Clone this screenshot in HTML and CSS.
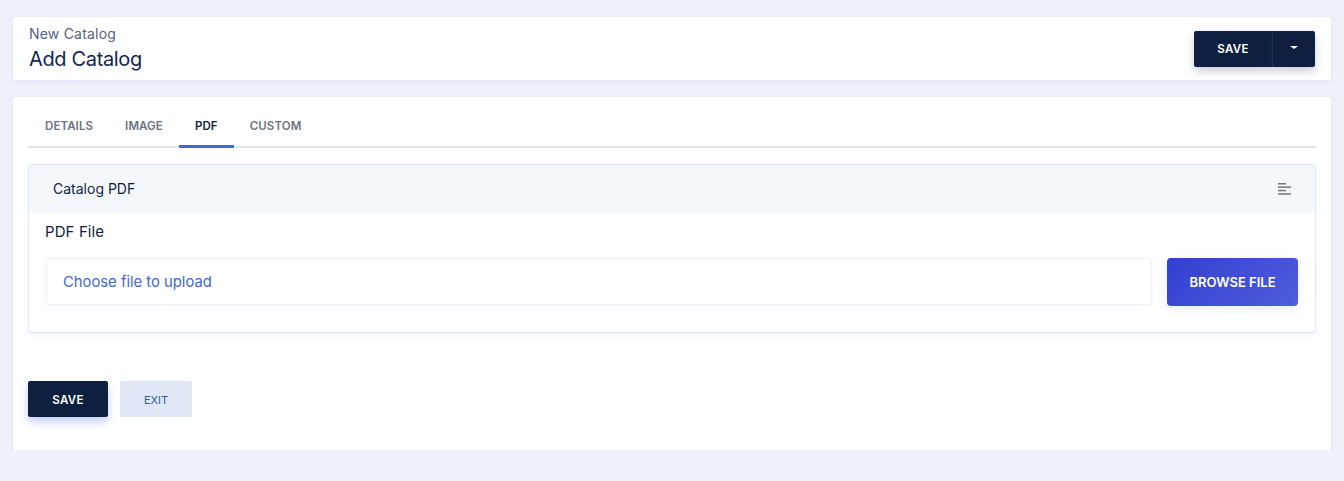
FILE: index.html
```html
<!DOCTYPE html>
<html lang="en">
<head>
    <meta charset="UTF-8">
    <title>Add Catalog</title>
    <link rel="stylesheet" href="styles.css">
</head>
<body>
    <header class="page-head">
        <div>
            <p class="crumb">New Catalog</p>
            <h1>Add Catalog</h1>
        </div>
        <div class="btn-split">
            <button class="btn btn-dark split-main">SAVE</button>
            <button class="btn btn-dark split-caret" aria-label="More"><span class="caret"></span></button>
        </div>
    </header>

    <main class="card">
        <nav class="tabs">
            <a class="tab">DETAILS</a>
            <a class="tab">IMAGE</a>
            <a class="tab active">PDF</a>
            <a class="tab">CUSTOM</a>
        </nav>

        <section class="panel">
            <div class="panel-head">
                <h2>Catalog PDF</h2>
                <svg class="panel-icon" width="14" height="14" viewBox="0 0 14 14" fill="#777">
                    <rect x="0" y="1" width="8" height="1.5"/>
                    <rect x="0" y="4.4" width="13" height="1.5"/>
                    <rect x="0" y="7.8" width="8" height="1.5"/>
                    <rect x="0" y="11.2" width="13" height="1.5"/>
                </svg>
            </div>
            <div class="panel-body">
                <label class="field-label">PDF File</label>
                <div class="upload">
                    <div class="upload-input">Choose file to upload</div>
                    <button class="browse-btn">BROWSE FILE</button>
                </div>
            </div>
        </section>

        <div class="actions">
            <button class="btn btn-dark btn-save">SAVE</button>
            <button class="btn btn-exit">EXIT</button>
        </div>
    </main>
</body>
</html>
```

FILE: styles.css
```css
* {
    margin: 0;
    padding: 0;
    box-sizing: border-box;
}

body {
    font-family: Inter, "Noto Sans", sans-serif;
    background: #edf1fa;
    color: #0f1f3d;
    padding: 17px 13px 0;
}

.page-head {
    height: 63px;
    background: #fff;
    border-radius: 3px;
    box-shadow: 0 1px 4px rgba(90, 110, 170, 0.1);
    padding: 0 16px;
    display: flex;
    justify-content: space-between;
    align-items: center;
    margin-bottom: 17px;
}

.crumb {
    font-size: 14px;
    line-height: 18px;
    letter-spacing: 0.2px;
    color: #55617f;
}

h1 {
    font-size: 20px;
    line-height: 30px;
    font-weight: 400;
    letter-spacing: -0.35px;
    color: #12264d;
    margin-top: 1px;
    margin-bottom: -1px;
}

.btn {
    border: none;
    border-radius: 2px;
    font-family: inherit;
    font-size: 11.5px;
    font-weight: 600;
    letter-spacing: 0.3px;
    height: 36px;
    padding-top: 1px;
}

.btn-dark {
    background: #0f1f3f;
    color: #fff;
    box-shadow: 0 4px 8px rgba(40, 60, 120, 0.25);
}

.btn-split {
    display: flex;
}

.split-main {
    width: 79px;
    border-right: 1px solid #24324f;
    border-radius: 2px 0 0 2px;
}

.split-caret {
    width: 42px;
    border-radius: 0 2px 2px 0;
    display: flex;
    align-items: center;
    justify-content: center;
}

.caret {
    border-left: 4px solid transparent;
    border-right: 4px solid transparent;
    border-top: 3px solid #fff;
    margin-bottom: 3px;
}

.card {
    height: 353px;
    background: #fff;
    border-radius: 3px;
    box-shadow: 0 1px 4px rgba(90, 110, 170, 0.1);
    padding: 13px 15px 0;
}

.tabs {
    display: flex;
    height: 38px;
    border-bottom: 2px solid #e2e5ee;
    margin-bottom: 16px;
}

.tab {
    padding: 0 16px;
    height: 38px;
    line-height: 32px;
    font-size: 11.5px;
    font-weight: 600;
    letter-spacing: 0.1px;
    color: #6c7280;
}

.tab:first-child {
    padding-left: 17px;
}

.tab.active {
    color: #0f1f3d;
    border-bottom: 3px solid #4169d0;
}

.panel {
    height: 169px;
    border: 1px solid #dfe6f5;
    border-radius: 3px;
    box-shadow: 0 2px 6px rgba(90, 110, 170, 0.06);
}

.panel-head {
    height: 48px;
    background: #f4f7fc;
    padding: 0 23px 0 24px;
    display: flex;
    justify-content: space-between;
    align-items: center;
}

.panel-head h2 {
    font-size: 14px;
    font-weight: 400;
    margin-bottom: 2px;
}

.panel-icon {
    margin-bottom: 1px;
}

.panel-body {
    padding: 9px 17px 0 16px;
}

.field-label {
    display: block;
    font-size: 15px;
    line-height: 20px;
    letter-spacing: 0.1px;
    margin-bottom: 16px;
}

.upload {
    display: flex;
    gap: 15px;
}

.upload-input {
    flex: 1;
    height: 47px;
    margin-left: 1px;
    border: 1px solid #f0f1f5;
    border-radius: 3px;
    padding-left: 16px;
    line-height: 47px;
    font-size: 14.8px;
    color: #3f68c8;
    box-shadow: 0 2px 6px rgba(90, 110, 170, 0.04);
}

.browse-btn {
    width: 131px;
    height: 48px;
    border: none;
    border-radius: 4px;
    background: linear-gradient(135deg, #3240d0, #4f5cdc);
    color: #fff;
    font-family: inherit;
    font-size: 13px;
    font-weight: 600;
    box-shadow: 0 3px 8px rgba(60, 70, 200, 0.12);
}

.actions {
    display: flex;
    gap: 12px;
    margin-top: 48px;
}

.btn-save {
    width: 80px;
    box-shadow: 0 5px 9px rgba(60, 100, 200, 0.3);
}

.btn-exit {
    width: 72px;
    background: #e1e8f5;
    color: #2f5a9e;
    font-size: 11px;
    font-weight: 400;
    letter-spacing: 0;
}
```
